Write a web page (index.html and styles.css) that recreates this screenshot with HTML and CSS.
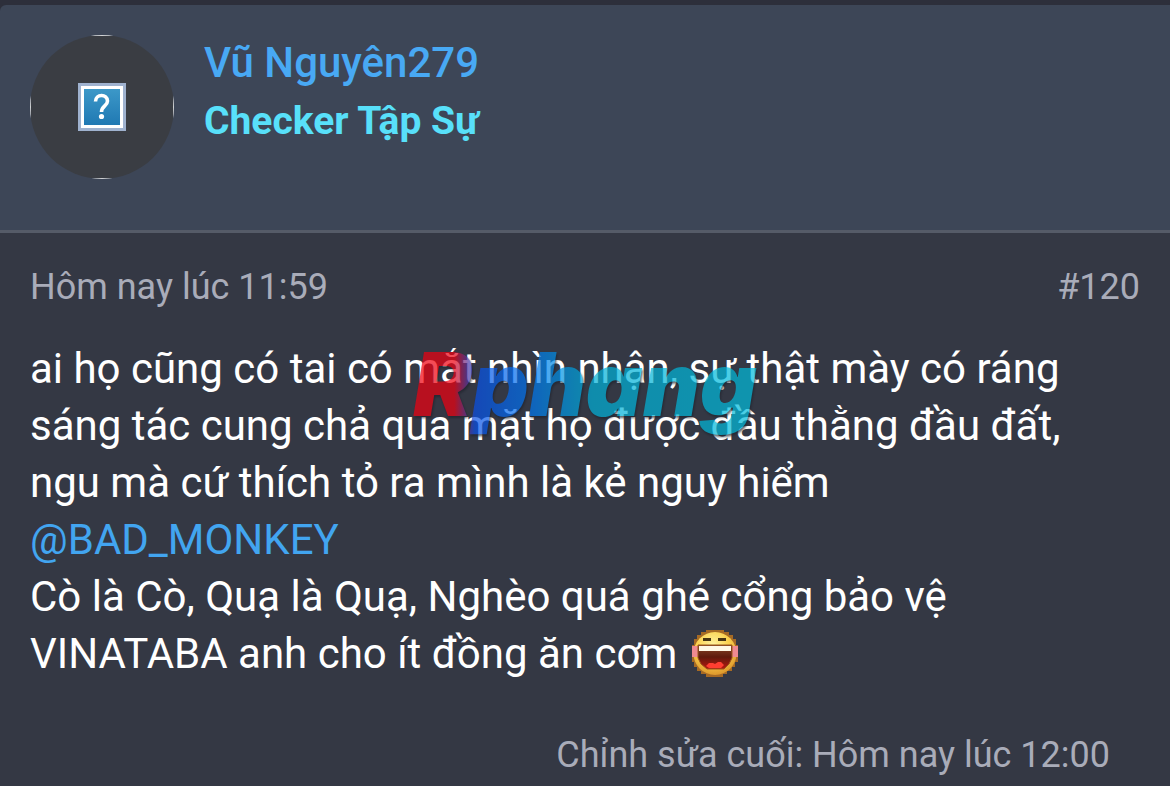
FILE: index.html
```
<!DOCTYPE html>
<html lang="vi">
<head>
<meta charset="utf-8">
<meta name="viewport" content="width=device-width, initial-scale=1">
<title>Vũ Nguyên279 – #120</title>
<link rel="stylesheet" href="styles.css">
</head>
<body>
<article class="post">
  <header class="post-user">
    <a class="avatar" href="#user" aria-label="Vũ Nguyên279">
      <svg class="avatar-icon" viewBox="0 0 48 48" aria-hidden="true">
        <defs><linearGradient id="tile" x1="0" y1="0" x2="0" y2="1"><stop offset="0" stop-color="#3c98c8"/><stop offset="1" stop-color="#2079b3"/></linearGradient></defs>
        <rect width="48" height="48" fill="#9fb2cf"/>
        <rect x="3" y="3" width="42" height="42" fill="#fff"/>
        <rect x="6" y="6" width="36" height="36" fill="url(#tile)"/>
        <path d="M17.500 18.500C17.500 10.500 29.500 10.500 29.500 18C29.500 23 23.500 23 23.500 29" fill="none" stroke="#fff" stroke-width="3.600"/>
        <circle cx="23.500" cy="33.500" r="2.600" fill="#fff"/>
      </svg>
    </a>
    <div class="user-details">
      <a class="user-name" href="#user">Vũ Nguyên279</a>
      <div class="user-title">Checker Tập Sự</div>
    </div>
  </header>
  <div class="post-main">
    <div class="post-meta">
      <a href="#post"><time>Hôm nay lúc 11:59</time></a>
      <a href="#post">#120</a>
    </div>
    <div class="post-body">
      ai họ cũng có tai có mắt nhìn nhận, sự thật mày có ráng<br>
      sáng tác cung chả qua mặt họ được đầu thằng đầu đất,<br>
      ngu mà cứ thích tỏ ra mình là kẻ nguy hiểm<br>
      <a class="mention" href="#mention">@BAD_MONKEY</a><br>
      Cò là Cò, Quạ là Quạ, Nghèo quá ghé cổng bảo vệ<br>
      VINATABA anh cho ít đồng ăn cơm
      <svg class="smiley" viewBox="0 0 48 48" role="img" aria-label="Cười lớn">
        <defs>
          <radialGradient id="face" cx=".45" cy=".3" r=".75"><stop offset="0" stop-color="#fff3a0"/><stop offset=".5" stop-color="#fbd14d"/><stop offset="1" stop-color="#d99027"/></radialGradient>
          <linearGradient id="mouth" x1="0" y1="0" x2="0" y2="1"><stop offset="0" stop-color="#8a4a2a"/><stop offset=".5" stop-color="#5e1a0c"/><stop offset="1" stop-color="#b81710"/></linearGradient>
        </defs>
        <path d="M15 1H33V3H38V6H42V10H45V16H47V33H44V38H41V42H36V45H32V48H15V45H10V42H6V38H3V33H1V16H3V10H6V6H10V3H15Z" fill="#a66a24"/>
        <circle cx="24" cy="24.500" r="21.500" fill="url(#face)"/>
        <path d="M1 17H7V28H1ZM41 17H47V28H41Z" fill="#ef8a91"/>
        <path d="M12 9H20V12H12ZM27 9H35V12H27Z" fill="#473413"/>
        <path d="M7 16H41V29L38 35L33 40H16L10 35L7 29Z" fill="url(#mouth)" stroke="#9b561c" stroke-width="1"/>
        <path d="M8 17H40V22H8Z" fill="#fff8e5"/>
        <path d="M15 37L18 34H22L24 35L27 33H30L33 36L30 39H18Z" fill="#ff3e31"/>
      </svg>
    </div>
    <div class="last-edit">Chỉnh sửa cuối: <time>Hôm nay lúc 12:00</time></div>
  </div>
  <div class="watermark" aria-hidden="true"><span>Rphang</span></div>
</article>
</body>
</html>
```
FILE: styles.css
```
* { box-sizing: border-box; }
body {
  margin: 0;
  background: #343844;
  color: #fff;
  font-family: Roboto, "Noto Sans", sans-serif;
}
a { color: inherit; text-decoration: none; }
.post {
  position: relative;
  border-top: 5px solid #2d2f3b;
  background: #2d2f3b;
}
.post-user {
  display: flex;
  gap: 30px;
  min-height: 228px;
  padding: 30px;
  background: #3d4657;
  border-bottom: 3px solid #555b68;
  border-top-left-radius: 6px;
}
.avatar {
  display: flex;
  align-items: center;
  justify-content: center;
  flex: none;
  width: 144px;
  height: 144px;
  border-radius: 50%;
  background:
    linear-gradient(#3a3d43, #3a3d43) center / 142px 142px no-repeat,
    #d0d2d4;
}
.avatar-icon { width: 48px; height: 48px; }
.user-name {
  display: block;
  color: #48a9f4;
  font-size: 42px;
  font-weight: 500;
  line-height: 56px;
}
.user-title {
  color: #58e0fa;
  font-size: 39px;
  font-weight: 700;
  line-height: 60px;
}
.post-main {
  padding: 30px;
  background: #343844;
}
.post-meta {
  display: flex;
  justify-content: space-between;
  color: #a9acb9;
  font-size: 36px;
  line-height: 48px;
}
.post-body {
  margin-top: 29px;
  font-size: 42px;
  line-height: 57px;
}
.mention { color: #42a5f0; }
.smiley {
  width: 48px;
  height: 48px;
  margin-left: 3px;
  vertical-align: -9px;
}
.last-edit {
  margin-top: 49px;
  padding-right: 30px;
  color: #a9acb9;
  font-size: 36px;
  line-height: 48px;
  text-align: right;
}
.watermark {
  position: absolute;
  top: 329px;
  right: 0;
  left: 0;
  text-align: center;
  font-family: Inter, sans-serif;
  font-size: 88px;
  font-style: italic;
  font-weight: 900;
  line-height: 100px;
  opacity: .7;
  filter: drop-shadow(1px 2px 1px #20232d);
  pointer-events: none;
}
.watermark span {
  background: linear-gradient(90deg, #f00010 0%, #f00010 12%, #0850e8 18%, #0078f0 35%, #00b0d8 52%, #00bcdc 100%);
  background-clip: text;
  color: transparent;
}
```
